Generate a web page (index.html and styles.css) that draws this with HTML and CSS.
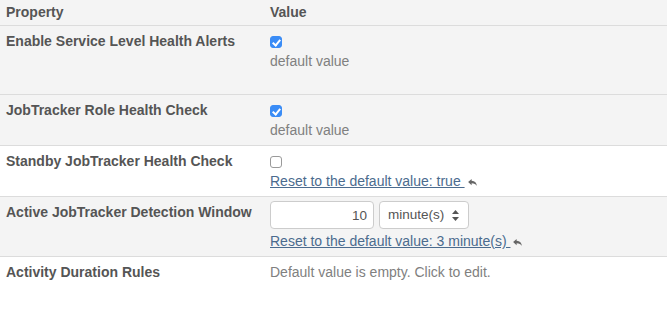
FILE: index.html
```html
<!DOCTYPE html>
<html lang="en">
<head>
  <meta charset="UTF-8" />
  <title>Configuration</title>
  <link rel="stylesheet" href="styles.css">
</head>
<body>

  <table class="config-table">
    <thead>
      <tr class="shaded">
        <th class="col-name">Property</th>
        <th>Value</th>
      </tr>
    </thead>
    <tbody>
      <tr class="shaded">
        <td class="col-name">Enable Service Level Health Alerts</td>
        <td>
          <input type="checkbox" class="check" checked />
          <div class="hint">default value</div>
          <div class="spacer"></div>
        </td>
      </tr>
      <tr class="shaded">
        <td class="col-name">JobTracker Role Health Check</td>
        <td>
          <input type="checkbox" class="check" checked />
          <div class="hint">default value</div>
        </td>
      </tr>
      <tr>
        <td class="col-name">Standby JobTracker Health Check</td>
        <td>
          <input type="checkbox" class="check" />
          <div class="reset">
            <a href="#">Reset to the default value: true&nbsp;</a><svg class="undo" viewBox="0 0 10 8" width="9" height="7"><path d="M4 0 L0 3.4 L4 7 V4.9 C7 4.9 8.8 5.8 10 8 C9.8 4.6 7.8 2.1 4 2 Z"/></svg>
          </div>
        </td>
      </tr>
      <tr class="shaded">
        <td class="col-name">Active JobTracker Detection Window</td>
        <td>
          <div class="duration">
            <input type="text" class="num" value="10" />
            <span class="select-wrap">
              <select class="unit">
                <option>minute(s)</option>
                <option>second(s)</option>
                <option>hour(s)</option>
              </select>
              <svg class="arrows" viewBox="0 0 7 11" width="7" height="11"><path d="M3.5 0 L7 4 H0 Z M0 7 H7 L3.5 11 Z"/></svg>
            </span>
          </div>
          <div class="reset">
            <a href="#">Reset to the default value: 3 minute(s)&nbsp;</a><svg class="undo" viewBox="0 0 10 8" width="9" height="7"><path d="M4 0 L0 3.4 L4 7 V4.9 C7 4.9 8.8 5.8 10 8 C9.8 4.6 7.8 2.1 4 2 Z"/></svg>
          </div>
        </td>
      </tr>
      <tr>
        <td class="col-name">Activity Duration Rules</td>
        <td><span class="empty">Default value is empty. Click to edit.</span></td>
      </tr>
    </tbody>
  </table>

</body>
</html>
```

FILE: styles.css
```css
* {
  box-sizing: border-box;
}

body {
  margin: 0;
  padding: 0;
  font-family: 'Liberation Sans', Arial, sans-serif;
  font-size: 14px;
  line-height: 18px;
  color: #555;
  background: #fff;
}

.config-table {
  width: 100%;
  border-collapse: collapse;
}

.config-table th,
.config-table td {
  text-align: left;
  vertical-align: top;
  padding: 6px 6px;
  border-bottom: 1px solid #dcdcdc;
}

.config-table th {
  padding: 3px 6px 4px;
  font-weight: bold;
}

.config-table tbody tr:last-child td {
  border-bottom: none;
  height: 72px;
}

.col-name {
  width: 264px;
  font-weight: bold;
}

.shaded {
  background: #f4f4f4;
}

/* checkboxes */
.check {
  -webkit-appearance: none;
  appearance: none;
  display: block;
  position: relative;
  width: 12px;
  height: 12px;
  margin: 4px 0 4px 0;
  border: 1px solid #9a9a9a;
  border-radius: 3px;
  background: #fff;
}

.check:checked {
  background: #3a8cf6;
  border-color: #3a8cf6;
}

.check:checked::after {
  content: "";
  position: absolute;
  left: 3px;
  top: 1px;
  width: 3px;
  height: 6px;
  border: solid #fff;
  border-width: 0 2px 2px 0;
  transform: rotate(40deg);
}

.hint,
.empty {
  color: #808080;
}

.spacer {
  height: 18px;
}

/* reset links */
.reset a {
  color: #4b6b8e;
  text-decoration: underline;
}

.undo {
  fill: #666;
  margin-left: 3px;
  vertical-align: 0;
}

/* duration input */
.duration {
  display: flex;
  gap: 5px;
  margin: -2px 0 3px;
}

.num {
  width: 104px;
  height: 28px;
  padding: 0 6px;
  border: 1px solid #ccc;
  border-radius: 4px;
  background: #fff;
  font: inherit;
  font-size: 13.5px;
  color: #555;
  text-align: right;
  outline: none;
}

.select-wrap {
  position: relative;
  display: inline-block;
}

.unit {
  -webkit-appearance: none;
  appearance: none;
  width: 90px;
  height: 28px;
  padding: 0 0 0 8px;
  border: 1px solid #ccc;
  border-radius: 4px;
  background: #fff;
  font: inherit;
  font-size: 13.5px;
  color: #555;
  outline: none;
}

.arrows {
  position: absolute;
  right: 10px;
  top: 9px;
  fill: #555;
  pointer-events: none;
}
```
